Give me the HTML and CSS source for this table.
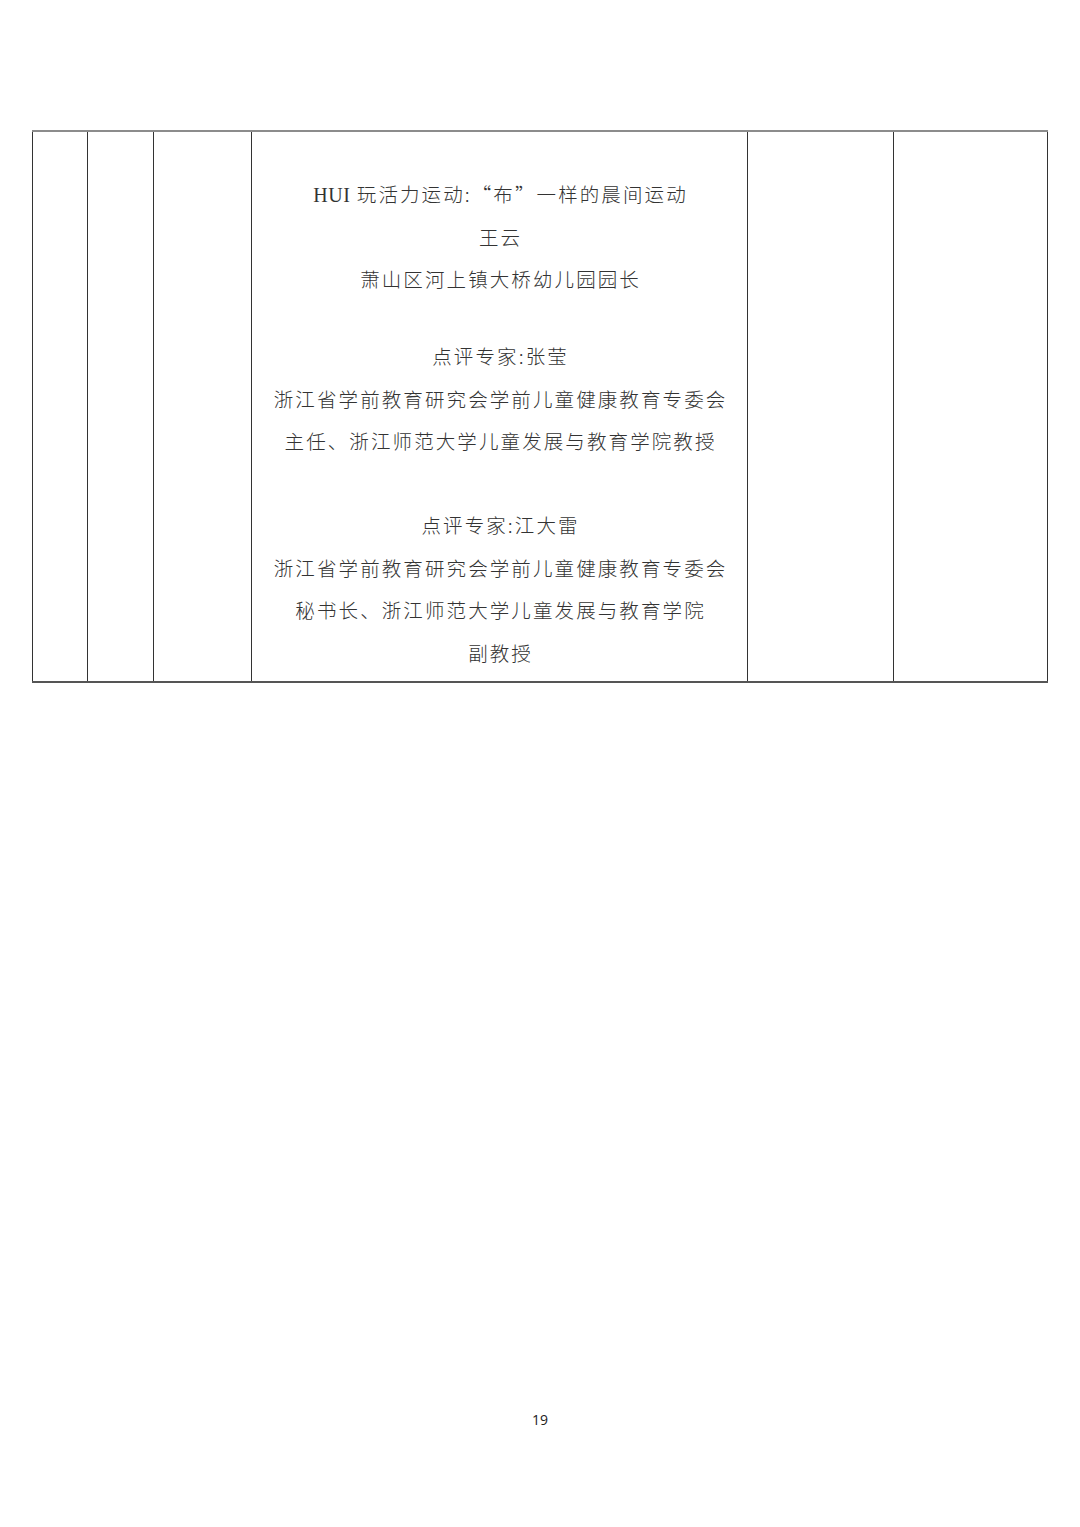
FILE: index.html
```html
<!DOCTYPE html>
<html lang="zh-CN">
<head>
<meta charset="utf-8">
<title>19</title>
<link rel="stylesheet" href="styles.css">
</head>
<body>
<div class="page">
  <div class="table">
    <div class="cell"></div>
    <div class="cell"></div>
    <div class="cell"></div>
    <div class="cell content">
      <p class="line"><span class="latin">HUI</span> 玩活力运动:“布”一样的晨间运动</p>
      <p class="line">王云</p>
      <p class="line">萧山区河上镇大桥幼儿园园长</p>
      <p class="line gap1">点评专家:张莹</p>
      <p class="line">浙江省学前教育研究会学前儿童健康教育专委会</p>
      <p class="line">主任、浙江师范大学儿童发展与教育学院教授</p>
      <p class="line gap2">点评专家:江大雷</p>
      <p class="line">浙江省学前教育研究会学前儿童健康教育专委会</p>
      <p class="line">秘书长、浙江师范大学儿童发展与教育学院</p>
      <p class="line">副教授</p>
    </div>
    <div class="cell"></div>
    <div class="cell last"></div>
  </div>
  <div class="pagenum">19</div>
</div>
</body>
</html>
```
FILE: styles.css
```css
html, body {
  margin: 0;
  padding: 0;
  background: #ffffff;
}
.page {
  width: 1080px;
  height: 1527px;
  position: relative;
  padding-top: 130px;
  box-sizing: border-box;
}
.table {
  margin-left: 32px;
  width: 1016px;
  height: 553px;
  display: grid;
  grid-template-columns: 55px 66px 98px 496px 146px 155px;
  border-top: 2px solid #8c8c8c;
  border-bottom: 2px solid #555555;
  box-sizing: border-box;
}
.cell {
  border-left: 1.5px solid #333333;
}
.cell.last {
  border-right: 1.5px solid #333333;
}
.content {
  padding-top: 41px;
  display: flex;
  flex-direction: column;
  align-items: center;
  font-family: "Noto Sans CJK SC", "Noto Sans", sans-serif;
  font-weight: 300;
  font-size: 19.5px;
  color: #333333;
  letter-spacing: 2.1px;
}
.line {
  margin: 0;
  line-height: 42.5px;
  height: 42.5px;
  white-space: nowrap;
  text-align: center;
  padding-left: 2.1px;
}
.latin {
  font-family: "Liberation Serif", serif;
  font-weight: 400;
  letter-spacing: 0.5px;
  font-size: 20px;
}
.gap1 {
  margin-top: 34.5px;
}
.gap2 {
  margin-top: 41.5px;
}
.pagenum {
  position: absolute;
  left: 0;
  right: 0;
  top: 1410px;
  text-align: center;
  font-family: "Open Sans", "Liberation Sans", sans-serif;
  font-size: 14px;
  color: #222;
}
```
